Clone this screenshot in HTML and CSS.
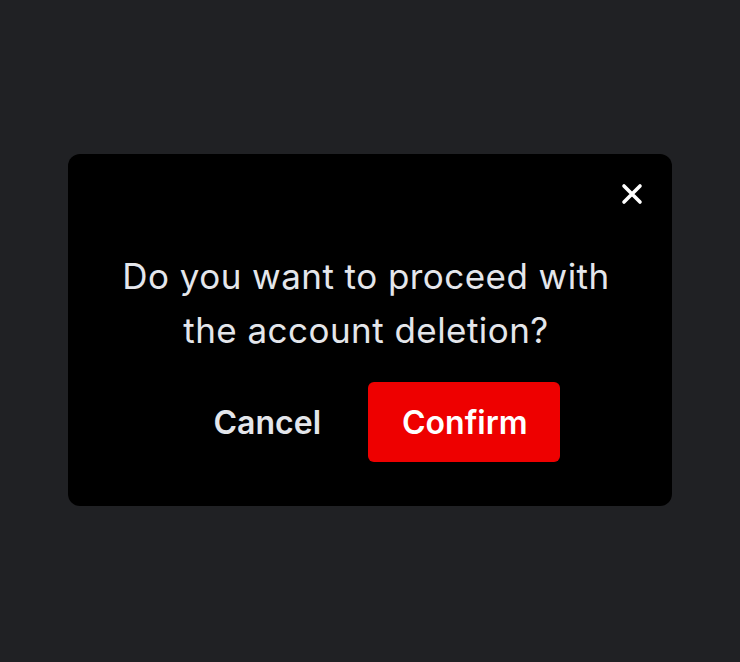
FILE: index.html
```html
<!DOCTYPE html>
<html lang="en">
<head>
<meta charset="utf-8">
<title>Confirm deletion</title>
<link rel="stylesheet" href="styles.css">
</head>
<body>
<div class="page">
  <div class="modal" role="dialog" aria-labelledby="modal-title">
    <div class="modal-header">
      <button class="close-btn" aria-label="Close">
        <svg width="22" height="22" viewBox="0 0 22 22" fill="none" stroke="#ffffff" stroke-width="3.6" stroke-linecap="round">
          <path d="M3 3 L19 19 M19 3 L3 19"/>
        </svg>
      </button>
    </div>
    <p class="modal-title" id="modal-title">Do you want to proceed with<br>the account deletion?</p>
    <div class="modal-actions">
      <button class="btn btn-cancel">Cancel</button>
      <button class="btn btn-confirm">Confirm</button>
    </div>
  </div>
</div>
</body>
</html>
```
FILE: styles.css
```css
* { box-sizing: border-box; }
html, body {
  margin: 0;
  padding: 0;
  background: #202124;
}
body {
  font-family: Inter, "Noto Sans", "Liberation Sans", sans-serif;
}
.page {
  min-height: 660px;
  display: flex;
  align-items: center;
  justify-content: center;
}
.modal {
  width: 604px;
  height: 352px;
  background: #000000;
  border-radius: 12px;
  padding: 29px 29px 44px;
  display: flex;
  flex-direction: column;
}
.modal-header {
  display: flex;
  justify-content: flex-end;
  height: 22px;
}
.close-btn {
  width: 22px;
  height: 22px;
  padding: 0;
  border: 0;
  background: transparent;
  display: block;
  cursor: pointer;
}
.close-btn svg { display: block; }
.modal-title {
  margin: 44px 0 0;
  padding-right: 8px;
  text-align: center;
  color: #e4e6eb;
  font-size: 35px;
  line-height: 54px;
  font-weight: 400;
  letter-spacing: 0.45px;
}
.modal-actions {
  margin-top: 25px;
  display: flex;
  justify-content: center;
  gap: 14px;
}
.btn {
  height: 80px;
  padding: 0 33px 0 34px;
  border: 0;
  border-radius: 6px;
  font-family: inherit;
  font-size: 32px;
  font-weight: 600;
  cursor: pointer;
}
.btn-cancel {
  background: transparent;
  color: #e4e6eb;
}
.btn-confirm {
  background: #ee0000;
  color: #ffffff;
}
```
